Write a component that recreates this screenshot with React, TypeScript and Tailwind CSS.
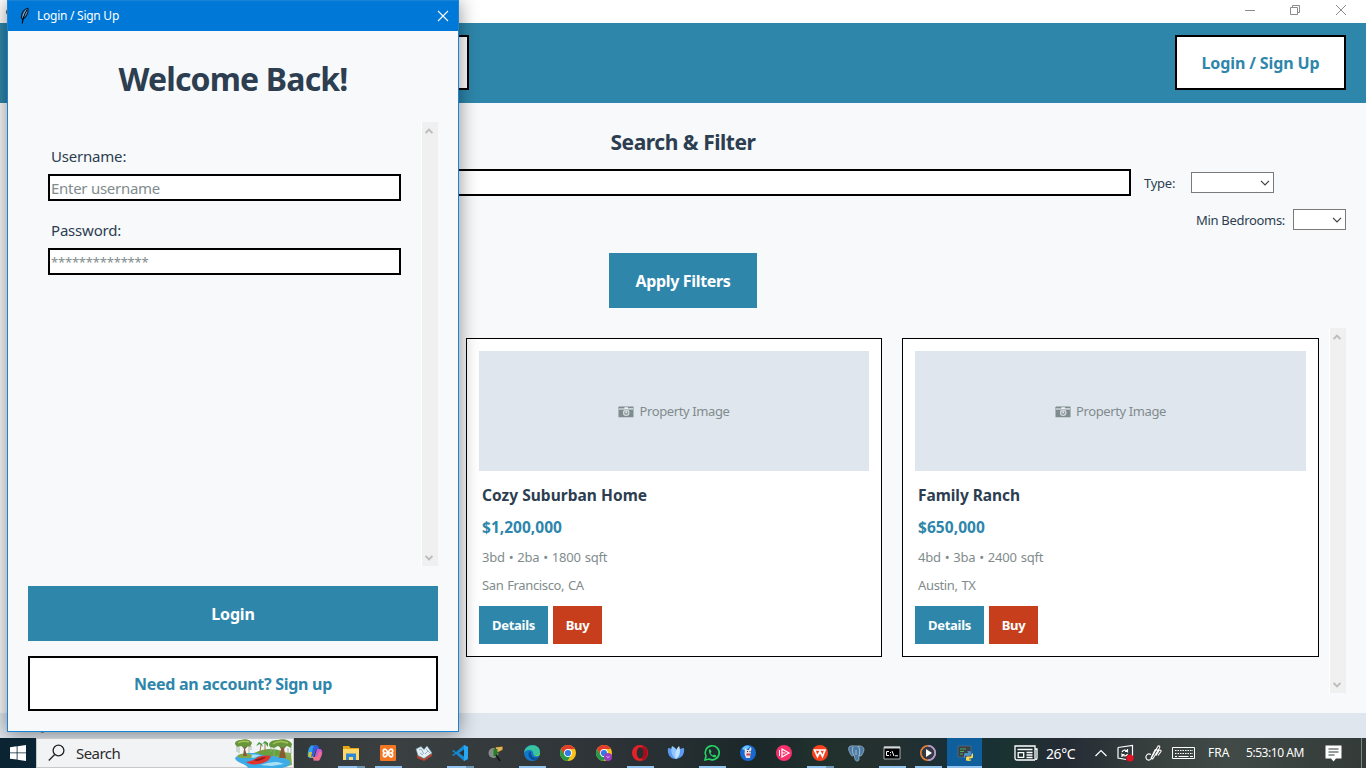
import React from "react";

type Property = { title: string; price: string; specs: string; city: string; width: string; titleTracking: string; priceTracking: string };

const properties: Property[] = [
  { title: "Cozy Suburban Home", price: "$1,200,000", specs: "3bd • 2ba • 1800 sqft", city: "San Francisco, CA", width: "w-[416px]", titleTracking: "tracking-[0.03px]", priceTracking: "tracking-[0.02px]" },
  { title: "Family Ranch", price: "$650,000", specs: "4bd • 3ba • 2400 sqft", city: "Austin, TX", width: "w-[417px]", titleTracking: "tracking-[-0.05px]", priceTracking: "tracking-[0.06px]" },
];

function CameraIcon() {
  return (
    <svg width="16" height="12" viewBox="0 0 16 12" className="shrink-0">
      <path d="M.5 1.200 1 .5h14.500v10.800H.5z" fill="#7f8c8d" />
      <path d="M1 2.300h5.500v1.400H1zM10 2h5v1.700h-5z" fill="#c9d1d7" />
      <path d="M6.500 1.300h3.500v2H6z" fill="#eef2f5" />
      <circle cx="8.200" cy="6.800" r="3.300" fill="#d3dbe1" />
      <circle cx="8.200" cy="6.800" r="2.100" fill="#929da0" />
      <circle cx="8.200" cy="6.300" r="1" fill="#e6ebef" />
    </svg>
  );
}

function Chevron({ up = false }: { up?: boolean }) {
  return (
    <svg width="8" height="6" viewBox="0 0 8 6" fill="none" stroke="#bdbdbd" strokeWidth="2">
      <path d={up ? "M.6 5 4 1.6 7.4 5" : "M.6 1 4 4.400 7.4 1"} />
    </svg>
  );
}

function Scrollbar() {
  return (
    <div className="flex w-[17px] shrink-0 flex-col items-start justify-between border-l border-white bg-[#f0f0f0] pt-[6px] pb-[5px] pl-[3px]">
      <Chevron up />
      <Chevron />
    </div>
  );
}

function Combo({ wide = false }: { wide?: boolean }) {
  return (
    <div className={`flex h-[21px] items-center justify-end border border-[#7a7a7a] bg-white pr-[3px] ${wide ? "w-[83px]" : "w-[53px]"}`}>
      <svg width="10" height="6" viewBox="0 0 10 6" fill="none" stroke="#404040" strokeWidth="1.2">
        <path d="M1 .8 5 4.8 9 .8" />
      </svg>
    </div>
  );
}

function Card({ p }: { p: Property }) {
  return (
    <div className={`h-[319px] shrink-0 border border-black bg-white p-[12px] ${p.width}`}>
      <div className="flex h-[120px] items-center justify-center gap-[5px] bg-[#dfe6ed] pt-[2px] text-[13px] tracking-[-0.38px] text-[#7f8c8d]">
        <CameraIcon />
        <span>Property Image</span>
      </div>
      <div className="flex flex-col pt-[14px] pl-[3px] text-[#7f8c8d]">
        <div className={`h-[20px] text-[15.5px] leading-[20px] font-bold text-[#2c3e50] ${p.titleTracking}`}>{p.title}</div>
        <div className={`mt-[12px] h-[20px] text-[15.5px] leading-[20px] font-bold text-[#2e86ab] ${p.priceTracking}`}>{p.price}</div>
        <div className="mt-[10px] h-[20px] text-[13px] leading-[20px] tracking-[-0.17px] [word-spacing:0.6px]">{p.specs}</div>
        <div className="mt-[8px] h-[20px] text-[13px] leading-[20px] tracking-[-0.35px] [word-spacing:0.7px]">{p.city}</div>
      </div>
      <div className="mt-[11px] flex gap-[5px] text-[13px] font-bold text-white">
        <button className="h-[38px] w-[69px] bg-[#2e86ab] pt-[2px] tracking-[-0.28px]">Details</button>
        <button className="h-[38px] w-[49px] bg-[#c73e1d] pt-[2px] tracking-[-0.35px]">Buy</button>
      </div>
    </div>
  );
}

function AppWindow() {
  return (
    <div className="flex h-[738px] flex-col bg-[#f8f9fb]">
      <div className="flex h-[23px] shrink-0 items-start justify-between bg-white">
        <div className="mt-[9px] ml-[6px] h-[6px] w-[4px] rounded-l bg-[#555]" />
        <svg width="110" height="20" viewBox="0 0 110 20" fill="none" stroke="#8c8c8c" className="mr-[14px]">
          <path d="M3 10.5h10" />
          <path d="M48.5 7.5h7v7h-7zM50.5 7.5v-2h7v7h-2" />
          <path d="m94 5 10 10M104 5 94 15" />
        </svg>
      </div>
      <header className="flex h-[80px] shrink-0 items-center justify-between bg-[#2e86ab] pr-[20px] pl-[270px]">
        <div className="-mt-px h-[55px] w-[199px] border-2 border-black bg-white" />
        <button className="-mt-px h-[55px] w-[171px] border-2 border-black bg-white pt-px text-[16px] font-bold tracking-[-0.11px] text-[#2e86ab]">Login / Sign Up</button>
      </header>
      <main className="flex flex-1 flex-col px-[20px] pt-[25px] text-[13px] text-[#2c3e50]">
        <h2 className="text-center text-[21px] leading-[28px] font-bold tracking-[-0.46px]">Search &amp; Filter</h2>
        <div className="mt-[13px] flex h-[27px] items-center">
          <div className="h-[27px] w-[1111px] border-2 border-black bg-white" />
          <span className="ml-[13px] w-[47px] pt-[2px] tracking-[-0.25px]">Type:</span>
          <Combo wide />
        </div>
        <div className="mt-[13px] flex h-[21px] items-center justify-end">
          <span className="mr-[8px] w-[89px] pt-[2px] tracking-[-0.31px] whitespace-nowrap">Min Bedrooms:</span>
          <Combo />
        </div>
        <button className="mt-[23px] h-[55px] w-[148px] self-center bg-[#2e86ab] pt-px text-[16px] font-bold tracking-[-0.34px] text-white">Apply Filters</button>
        <div className="mt-[20px] flex h-[365px] justify-between">
          <div className="flex w-[1299px] gap-[20px] pt-[10px] pl-[10px]">
            <div className="w-[416px] shrink-0 border border-black bg-white" />
            {properties.map((p) => (
              <Card key={p.title} p={p} />
            ))}
          </div>
          <Scrollbar />
        </div>
      </main>
      <footer className="h-[25px] shrink-0 bg-[#dfe6ed] pl-[41px] text-[13px] leading-[25px] text-[#7f8c8d]">y</footer>
    </div>
  );
}

function Dialog() {
  return (
    <div className="absolute top-0 left-[7px] flex h-[732px] w-[452px] flex-col border border-[#1883d7] bg-[#f8f9fb] shadow-[0_2px_18px_rgba(0,0,0,0.45)]">
      <div className="flex h-[30px] shrink-0 items-center bg-[#0078d7] pl-[11px] text-[12px] tracking-[-0.26px] text-white">
        <svg width="12" height="18" viewBox="0 0 12 18">
          <path d="M9 1.200C5.500 1.500 2.400 5.500 2.300 10.800l1.400 1.400C6.800 11 9.700 6 9 1.200z" fill="#4a90d0" stroke="#0a1624" strokeWidth="1.1" />
          <path d="M7.600 3.600 4.600 9" stroke="#d8ecff" strokeWidth="1.4" />
          <path d="M8 3C6 6 4 10 3.300 16.500" stroke="#000" strokeWidth="1.1" fill="none" />
        </svg>
        <span className="ml-[6px]">Login / Sign Up</span>
        <svg width="12" height="12" viewBox="0 0 12 12" stroke="#fff" strokeWidth="1.1" className="mr-[9px] ml-auto">
          <path d="m1 1 10 10M11 1 1 11" />
        </svg>
      </div>
      <div className="flex flex-1 flex-col px-[20px] pt-[28px] pb-[20px]">
        <h1 className="text-center text-[32px] leading-[40px] font-bold tracking-[-0.84px] text-[#2c3e50]">Welcome Back!</h1>
        <div className="mt-[23px] flex h-[444px]">
          <div className="flex flex-1 flex-col px-[20px] pt-[24px] text-[15px] leading-[20px] text-[#2c3e50]">
            <label className="pl-[3px] tracking-[-0.2px]">Username:</label>
            <div className="mt-[8px] flex h-[27px] items-center border-2 border-black bg-white pl-px tracking-[-0.28px] text-[#7f8c8d]">Enter username</div>
            <label className="mt-[19px] pl-[3px] tracking-[-0.2px]">Password:</label>
            <div className="mt-[8px] flex h-[27px] items-center border-2 border-black bg-white pl-px text-[13px] tracking-[-0.2px] text-[#7f8c8d]">**************</div>
          </div>
          <Scrollbar />
        </div>
        <button className="mt-[20px] h-[55px] bg-[#2e86ab] pt-px text-[16px] font-bold tracking-[-0.15px] text-white">Login</button>
        <button className="mt-[15px] h-[55px] border-2 border-black bg-white pt-px text-[16px] font-bold tracking-[-0.29px] text-[#2e86ab]">Need an account? Sign up</button>
      </div>
    </div>
  );
}

function RiverArt() {
  return (
    <svg width="59" height="29" viewBox="0 0 59 29">
      <path d="M16 15 30 11l27 3 1 12-12 3H20z" fill="#86ad4a" />
      <path d="M1 19c4-5 12-5 22-5 8 0 14 2 20 4 8 1 15 3 13 7-1 2-4 3-8 4H14c-1-4-12-5-13-10z" fill="#3cabe6" />
      <path d="M5 18c7-3 15-3 22-2l-7 3c-5-1-9 0-15-1zM26 26c6-2 12-3 18-3l6 2-12 2z" fill="#a5e0f7" />
      <path d="M22 14c6-5 18-5 26-2l1 4c-8 2-20 1-27-2z" fill="#69a13d" />
      <path d="M3 17c4-3 10-3 15-1l-1 3H6z" fill="#84a845" />
      <path d="M8 7l2 3-1 7 4 0-2-7 3-3zM45 7l2 3-2 9h7l-2-9 3-4z" fill="#8a5a34" />
      <path d="M1 5c0-3 3-4 6-4 4-2 10 0 11 3l-2 4-3-1-3 2-3-2-4 1zM35 6c0-4 5-5 9-5 5-2 12 0 14 4l-1 4-4-2-4 2-5-2-4 2-4-1z" fill="#66953c" />
      <path d="M4 4c3-2 7-2 11-1M39 5c4-3 10-3 15-1" stroke="#a6c255" strokeWidth="1.500" fill="none" />
      <path d="M3 8v5M5 8v6M15 8v6M17 7v4M37 8v5M40 9v8M54 9v8M57 8v7" stroke="#8fae9a" strokeWidth=".8" />
      <path d="m26 13 1-8M31 13V4" stroke="#a57a45" strokeWidth="1" />
      <path d="m22 7 3-4 3 2 1 3-3-3zM28 5l3-3 3 2 0 4-3-4z" fill="#3f9a44" />
      <path d="M12 23c5-1 8-2 12-5 3-1 8-2 13-1-2 5-6 7-13 8-5 1-9 0-12-2z" fill="#e0352c" />
      <path d="M20 21c4-1 8-3 12-3-2 2-6 4-10 4z" fill="#8c1d1d" />
    </svg>
  );
}

function Chrome() {
  return (
    <>
      <circle cx="8" cy="8" r="8" fill="#fbc116" />
      <path d="M1.100 4A8 8 0 0 1 14.900 4H8L4.500 10z" fill="#e33b2e" />
      <path d="M1.100 4a8 8 0 0 0 6.400 12l3.500-6-6.500 0z" fill="#27994a" />
      <circle cx="8" cy="8" r="3.900" fill="#fff" />
      <circle cx="8" cy="8" r="3.100" fill="#317be8" />
    </>
  );
}

const taskIcons: { key: string; line: "none" | "full" | "split"; art: React.ReactNode }[] = [
  { key: "copilot", line: "none", art: (<><path d="M4 .5h6L6 13H2.500C-1 12 1 3 4 .5z" fill="#2b9fe8" /><path d="M2 7 1 11.500 5.500 13l2-6z" fill="#c8c43a" /><path d="M7 .5h4l1.500 4H9L6.500 11 4 12 6 3z" fill="#315dde" /><path d="M10 4h3.500c3.500 1 1 9-1.500 11.500H6.500L10 4z" fill="#c25bd4" /><path d="M5.500 12H10l2.500-6 2.500 2-3 7.500H7z" fill="#f0708a" /></>) },
  { key: "explorer", line: "split", art: (<><path d="M0 1h6l1.500 2H16v3H0z" fill="#e8a614" /><path d="M0 4h16v11H0z" fill="#ffd766" /><path d="M3 15V8.500h10V15h-3v-3H6v3z" fill="#2e86d8" /></>) },
  { key: "xampp", line: "full", art: (<><rect width="16" height="16" rx="1" fill="#f37623" /><path d="M4.500 4Q6.500 4 8 8t3.500 4M11.500 4Q9.500 4 8 8t-3.500 4M4.500 4Q2 6 4.500 8 2 10 4.500 12M11.500 4q2.500 2 0 4 2.500 2 0 4M4.500 8h7" fill="none" stroke="#fff" strokeWidth="1.700" /></>) },
  { key: "reader", line: "none", art: (<><path d="m1 10 7 4 8-6v3l-8 5-7-3z" fill="#b5402e" /><path d="m0 4 5-2.500 3 3 3-3.500 5 7-8 5.500-6-3z" fill="#e3eff5" stroke="#6d92a8" strokeWidth=".6" /><path d="m3 5 2-1 3 5M10 4l4 4M4 8l3 2M9 9l3-3" stroke="#7ba0b8" strokeWidth=".8" fill="none" /></>) },
  { key: "vscode", line: "split", art: (<><path d="m12 0 4 2v12l-4 2-8-7-2.500 2L0 10l3-2-3-2 1.500-1L4 7z" fill="#1489d2" /><path d="M12 4.500v7L7 8z" fill="#2d3438" /><path d="m12 0 4 2v12l-4 2z" fill="#2aa7f2" /></>) },
  { key: "snip", line: "none", art: (<><circle cx="5.500" cy="8" r="5" fill="#868e89" /><path d="m7 2 8-1 0 4-6 3z" fill="#dcb45c" stroke="#3c2c12" strokeWidth=".8" /><path d="M5.500 4h4v7h-4z" fill="#2a7d28" /><path d="m8 10 4 6" stroke="#111" strokeWidth="1.400" /></>) },
  { key: "edge", line: "full", art: (<><circle cx="8" cy="8" r="8" fill="#1478c8" /><path d="M0 8C1-2 15-2 16 6c0 4-5 5-7 3 1-3-2-4-4-4-3 0-5 2-5 3z" fill="#37c2a0" /><path d="M6 6c-3 3-1 8 3 9 3 0 5-1 6-3-4 2-8 0-8-4z" fill="#0b4e9b" /><path d="M9 9c2 2 7 1 7-3l0 3c-1 3-5 3-7 0z" fill="#67d85e" /></>) },
  { key: "chrome", line: "none", art: <Chrome /> },
  { key: "chrome-profile", line: "none", art: (<><Chrome /><circle cx="12" cy="12" r="4" fill="#9b3fc0" /><path d="m10.500 11 1.500 2 1.500-2" stroke="#d9a8ea" strokeWidth=".9" fill="none" /></>) },
  { key: "opera", line: "full", art: (<><circle cx="8" cy="8" r="8" fill="#e8202c" /><path d="M11 1c6 3 6 11 0 14-3-2-3-12 0-14z" fill="#a70e1d" /><ellipse cx="8" cy="8" rx="3.300" ry="5.700" fill="#26302f" /></>) },
  { key: "lotus", line: "none", art: (<><path d="M0 3c5 0 8 5 8 11C2 14-1 9 0 3zM16 3c-5 0-9 4-8 11 6-1 9-5 8-11z" fill="#5b9cf2" /><path d="M4 1c5 2 7 7 4 13-4-2-6-9-4-13z" fill="#8fc6ff" /><path d="M11 1c2 5 1 10-3 13-2-5 0-10 3-13z" fill="#bfe0ff" /></>) },
  { key: "whatsapp", line: "full", art: (<><path d="m1 15 1-4a7 7 0 1 1 3 3z" fill="none" stroke="#25d366" strokeWidth="1.600" /><path d="M5 4.500h1.500L7.500 7l-1 1c.7 1.500 1.500 2 2.500 2.500l1-1 2.200 1v1.200C9 14 4 9 5 4.500z" fill="#25d366" /></>) },
  { key: "rabbit", line: "none", art: (<><circle cx="8" cy="8" r="8" fill="#1769cf" /><path d="M2 4a7 7 0 0 1 8-3L6 6z" fill="#69c3ff" /><path d="m5 3 2 2h2l1-3 1.500 1-.5 3-1 7H6L4.500 9z" fill="#e9dede" /><path d="M6.500 8.500h4v2h-4z" fill="#cf3d48" /><path d="M7 6.500h1M9.500 6.500h1" stroke="#333" /></>) },
  { key: "play-pink", line: "none", art: (<><circle cx="8" cy="8" r="8" fill="#f5306a" /><path d="M6 4v8l7-4zM6 8h3.500" fill="none" stroke="#fff" strokeWidth="1.200" /><path d="M3.500 5v6" stroke="#fff" /></>) },
  { key: "wps", line: "split", art: (<><circle cx="8" cy="8" r="8" fill="#f8421e" /><path d="M2.500 5H13l-2.500 6.500L8 6.500l-2.500 5z" fill="none" stroke="#fff" strokeWidth="1.700" /></>) },
  { key: "postgres", line: "none", art: (<><path d="M1 2c2-2 5-1 7-1s7-1 8 3c0 3-2 6-3 7l-2 0v4c-1 2-4 1-4-1l-1-4c-1 2-3 1-4-2C1 6 0 4 1 2z" fill="#4b7ba5" stroke="#a5bccd" strokeWidth=".7" /><path d="M5 2c-1 3-1 6 1 8M10 1c2 2 2 6 1 10M8 5v5" stroke="#c7d5df" strokeWidth=".7" fill="none" /></>) },
  { key: "cmd", line: "full", art: (<><path d="M0 2h16v12H0z" fill="#000" stroke="#b9c0c3" strokeWidth=".9" /><path d="M0 1.500h16v2H0z" fill="#d4d8db" /><path d="M5 6.500H2.500v4H5M6.500 7v1M6.500 9.500v1M8 6l2 5M11 10.800h3" stroke="#fff" strokeWidth="1" fill="none" /></>) },
  { key: "media", line: "full", art: (<><circle cx="8" cy="8" r="7.200" fill="#333a45" stroke="#f08538" strokeWidth="1.600" /><path d="M8 .8a7.200 7.200 0 0 1 0 14.400" fill="none" stroke="#a99be0" strokeWidth="1.600" /><path d="M6 4v8l6-4z" fill="#fff" /></>) },
  { key: "python", line: "full", art: (<><path d="M1 1h13v11H1z" fill="#3b4148" stroke="#69747c" strokeWidth=".6" /><path d="M3 4h6M3 6.500h4M3 9h3" stroke="#4fae5b" /><path d="M10 6h3l1 1v3l-2 1H8v2H7V9l1-1h3V7z" fill="#4b91c9" /><path d="M15 8.500h1v4l-2 1h-2v1h2v1l-2 .5-3-.5v-3l1-1h4z" fill="#ffd94b" /></>) },
];

function Taskbar() {
  return (
    <div className="relative flex h-[30px] items-stretch bg-[linear-gradient(90deg,#33383c_0%,#34393c_22%,#3a4041_29%,#33393b_38%,#2c3236_45%,#252f31_50%,#1b2729_55%,#20312d_60%,#25302f_65%,#183038_70%,#1b3231_74%,#252b34_78%,#39423f_85%,#414a47_90%,#333a37_100%)]">
      <div className="flex w-[36px] items-center justify-center bg-[#0b2434]">
        <svg width="16" height="16" viewBox="0 0 16 16" fill="#fff">
          <path d="M0 2.300 6.700 1.300v6.200H0zM7.500 1.200 16 0v7.500H7.500zM0 8.300h6.700v6.300L0 13.700zM7.500 8.300H16V16l-8.500-1.200z" />
        </svg>
      </div>
      <div className="flex w-[258px] items-center border border-[#c8c8c8] bg-[#f2f3f5] pl-[11px]">
        <svg width="17" height="18" viewBox="0 0 17 18" fill="none" stroke="#222" strokeWidth="1.300">
          <circle cx="10.500" cy="6.500" r="5.400" />
          <path d="M6.700 10.500.8 16.500" />
        </svg>
        <span className="ml-[11px] text-[15px] tracking-[-0.55px] text-[#2b2b2b]">Search</span>
        <div className="ml-auto">
          <RiverArt />
        </div>
      </div>
      <div className="ml-[3px] flex">
        {taskIcons.map((t, i) => (
          <div key={t.key} className={`flex flex-col items-center ${i === 2 ? "ml-px" : ""} ${t.key === "python" ? "ml-px w-[35px] bg-[#0f5f9d]" : "w-[36px]"}`}>
            <svg width="16" height="16" viewBox="0 0 16 16" className="mt-[7px] overflow-visible">{t.art}</svg>
            <div className={`mt-auto flex h-[2px] ${t.key === "python" ? "w-[35px]" : "w-[27px]"}`}>
              {t.line !== "none" && <div className="flex-1 bg-[#91c3ee]" />}
              {t.line === "split" && <div className="w-[8px] bg-[#6e93b1]" />}
            </div>
          </div>
        ))}
      </div>
      <div className="flex flex-1 items-center text-[12px] text-white">
        <svg width="24" height="16" viewBox="0 0 24 16" fill="none" stroke="#fff" strokeWidth="1.300" className="ml-[32px]">
          <path d="M21 15H3C1.500 15 1 14 1 13V1h20v12c0 2 2 2 2 0V4h-2M3.500 4.500h15M12.500 7.500h6M12.500 10h6M12.500 12.500h6" />
          <path d="M4.200 7.700h5.500v4.600H4.200z" />
        </svg>
        <span className="ml-[8px] w-[30px] text-[14px] tracking-[-0.4px] whitespace-nowrap">26°C</span>
        <svg width="12" height="8" viewBox="0 0 12 8" fill="none" stroke="#fff" strokeWidth="1.200" className="ml-[19px]">
          <path d="m.5 7 5.500-5.500L11.500 7" />
        </svg>
        <svg width="18" height="18" viewBox="0 0 18 18" fill="none" stroke="#fff" strokeWidth="1.200" className="ml-[10px] overflow-visible">
          <path d="M1 3.500 15.500 1.500V12M1 3.500V14l8 1.500M5 8c1-2.500 4-2.500 5.500-.5V5M10.500 7.500H8M10.500 10c-1 2.500-4 2.500-5.500.5V13M5 10.500h2.500" />
          <circle cx="13" cy="14" r="3.600" fill="#e81123" stroke="none" />
        </svg>
        <svg width="17" height="18" viewBox="0 0 17 18" fill="none" stroke="#fff" strokeWidth="1.100" className="ml-[10px]">
          <path d="M6 10.500c-4-2-6.500 2.500-4 5 2 1.500 4.500 0 5-2.500L12.500 3c1-2 3-1 2 1L8 14.500c-1 1-2.500 0-1.500-1.500l3.500-7c1-1.500 2.500-.5 2 1M11 11.500l3-5c1-1 2.500 0 2 1l-3 4" />
        </svg>
        <svg width="24" height="14" viewBox="0 0 24 14" fill="none" stroke="#fff" className="ml-[10px]">
          <path d="M.5 1.500h22v11H.5z" />
          <path d="M3 4.500h18M3 7.500h18" strokeDasharray="1.500 1" />
          <path d="M3 10.500h2M6.500 10.500h10M18 10.500h3" />
        </svg>
        <span className="ml-[12px] w-[22px]">FRA</span>
        <span className="ml-[16px] w-[60px] tracking-[-0.44px] whitespace-nowrap">5:53:10 AM</span>
        <svg width="17" height="17" viewBox="0 0 17 17" className="ml-[19px]">
          <path d="M.5.5h16v13H11l-2.500 3L6 13.500H.5z" fill="#fff" />
          <path d="M3.500 4h10M3.500 7h10M3.500 10h6" stroke="#333b39" strokeWidth="1.200" />
        </svg>
        <div className="mr-[4px] ml-auto h-full w-px bg-[#7c8481]" />
      </div>
    </div>
  );
}

export default function App() {
  return (
    <div className="relative h-[768px] w-[1366px] overflow-hidden font-['Noto_Sans',sans-serif]">
      <AppWindow />
      <Dialog />
      <Taskbar />
    </div>
  );
}
